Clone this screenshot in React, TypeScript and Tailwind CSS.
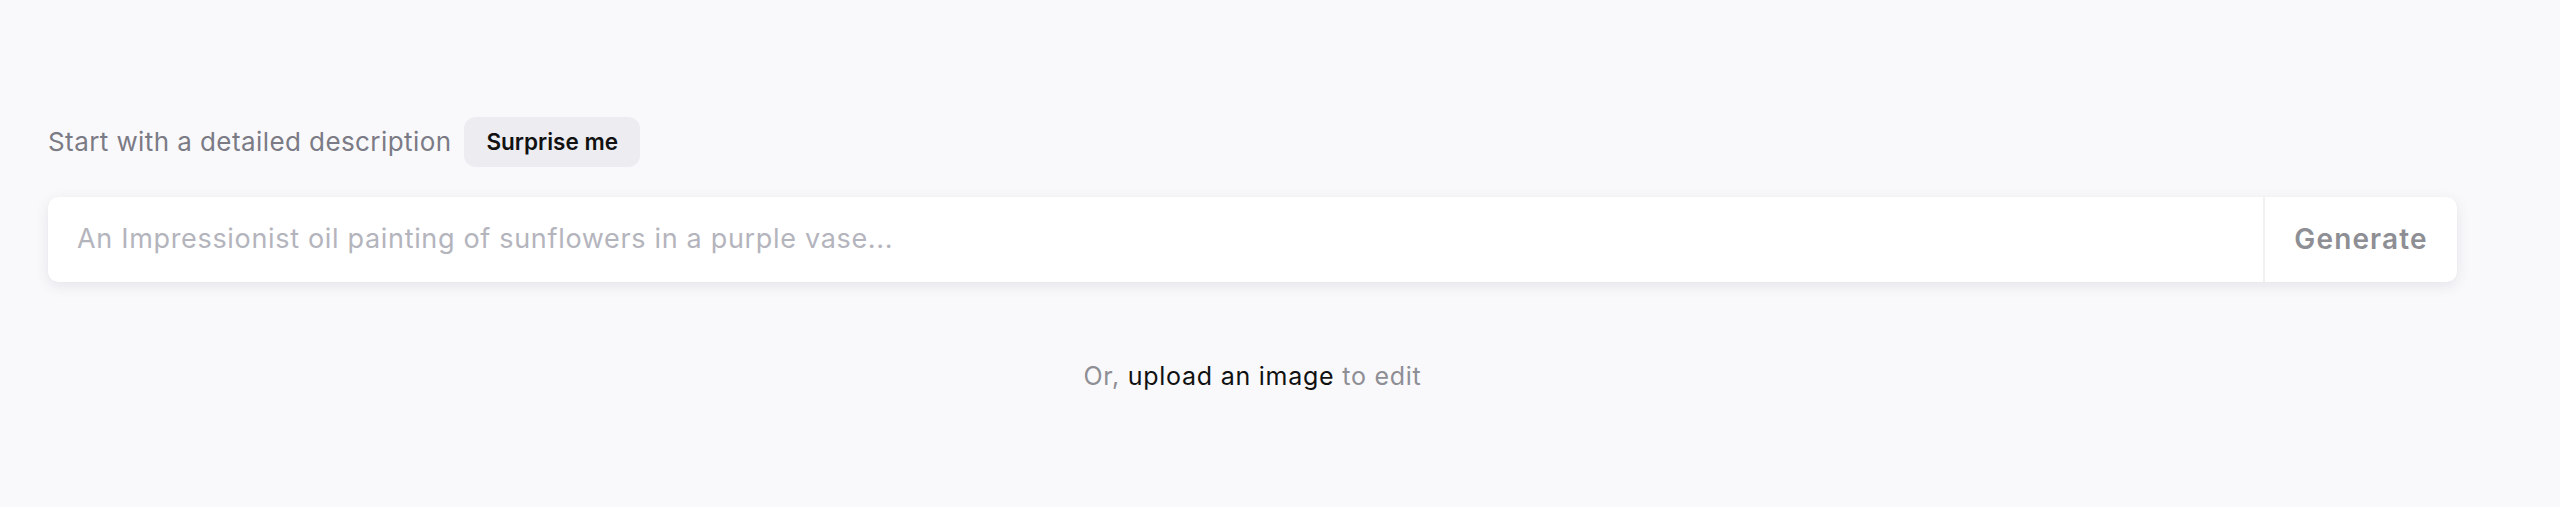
export default function App() {
  return (
    <div className="min-h-[507px] w-full bg-[#f9f9fb] pt-[117px] font-['Inter','Noto_Sans',sans-serif]">
      <div className="ml-[48px] w-[2409px]">
        {/* Prompt label */}
        <div className="flex items-center gap-[13px]">
          <span className="text-[26px] leading-none tracking-[0.016em] text-[#7b7b86]">Start with a detailed description</span>
          <button className="h-[50px] rounded-[12px] bg-[#ececf1] px-[22px] text-[22.5px] font-semibold text-[#111]">
            Surprise me
          </button>
        </div>

        {/* Prompt input */}
        <div className="mt-[30px] flex h-[85px] items-stretch overflow-hidden rounded-[10px] bg-white shadow-[0_4px_14px_rgba(60,60,100,0.10),0_0_1px_rgba(0,0,0,0.06)]">
          <input
            className="flex-1 bg-transparent pl-[29px] text-[27px] tracking-[0.025em] text-[#202123] placeholder:text-[#b4b4bd] outline-none"
            placeholder="An Impressionist oil painting of sunflowers in a purple vase..."
          />
          <button className="w-[194px] border-l-2 border-[#f1f1f4] pb-[2px] text-[28px] tracking-[0.04em] font-semibold text-[#8e8e95]">
            Generate
          </button>
        </div>

        {/* Upload hint */}
        <p className="mt-[82px] text-center text-[25px] leading-none tracking-[0.03em] text-[#8e8e95]">
          Or, <span className="text-[#111]">upload an image</span> to edit
        </p>
      </div>
    </div>
  );
}
